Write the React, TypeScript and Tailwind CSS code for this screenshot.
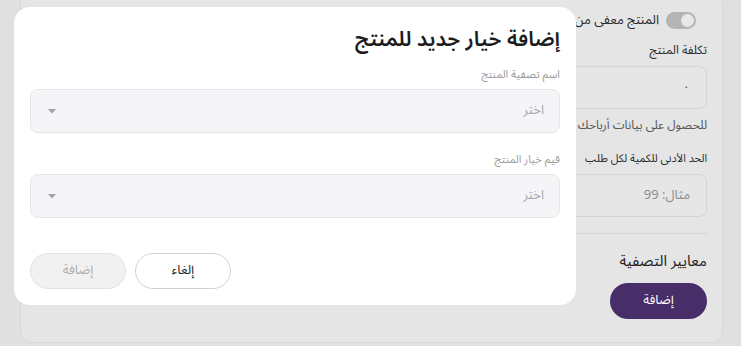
import React from "react";

function Caret() {
  return (
    <svg width="8" height="5" viewBox="0 0 8 5" className="block">
      <path d="M0 0 L8 0 L4 4.5 Z" fill="#a3a1aa" />
    </svg>
  );
}

function SelectBox() {
  return (
    <div className="h-[44px] w-full rounded-[8px] border border-[#e6e6ea] bg-[#f5f5f7] flex items-center justify-between pr-[15px] pl-[17px]">
      <span className="text-[13px] text-[#a8a8ad]">اختر</span>
      <Caret />
    </div>
  );
}

export default function App() {
  return (
    <div
      dir="rtl"
      className="relative w-[741px] h-[346px] overflow-hidden bg-[#e0e0e0]"
      style={{ fontFamily: "'Noto Sans Arabic', 'Noto Sans', sans-serif" }}
    >
      {/* background card */}
      <div className="mr-[18px] w-[703px] -mt-[10px] pt-[21px] pb-[23px] pr-[15px] pl-[15px] rounded-[12px] border border-[#d8d8d8] bg-[#e5e5e5]">
        <div className="flex items-center h-[17px] gap-[7px] mr-[11px]">
          <div className="relative shrink-0 w-[30px] h-[17px] rounded-full bg-[#b4b4b4]">
            <div className="absolute right-[2px] top-[2px] w-[13px] h-[13px] rounded-full bg-[#e8e8e8]" />
          </div>
          <div className="w-[85px] overflow-hidden whitespace-nowrap text-[13px] leading-[17px] text-[#2a2a2a]">
            المنتج معفى من <span className="text-[#3b6fd0]">الضريبة</span>
          </div>
        </div>
        <div className="mt-[14px] h-[16px] leading-[16px] text-[12px] text-[#2a2a2a]">تكلفة المنتج</div>
        <div className="mt-[7px] h-[43px] rounded-[8px] border border-[#d4d4d4] bg-[#e6e6e6] flex items-center pr-[16px]">
          <span className="text-[13px] text-[#555]">٠</span>
        </div>
        <div className="mt-[9px] w-[132px] overflow-hidden h-[16px] leading-[16px] text-[12px] text-[#555] whitespace-nowrap">
          للحصول على بيانات أرباحك بدقة، أدخل تكلفة المنتج
        </div>
        <div className="mt-[17px] h-[16px] leading-[16px] text-[11px] text-[#2a2a2a]">الحد الأدنى للكمية لكل طلب</div>
        <div className="mt-[7px] h-[43px] rounded-[8px] border border-[#d4d4d4] bg-[#e6e6e6] flex items-center pr-[16px]">
          <span className="text-[13px] text-[#8e8e8e]">مثال: 99</span>
        </div>
        <div className="mt-[16px] h-px bg-[#d4d4d4]" />
        <div className="mt-[15px] h-[24px] leading-[24px] text-[15px] text-[#222]">معايير التصفية</div>
        <div className="mt-[10px] flex">
          <div className="w-[97px] h-[36px] rounded-full bg-[#472e69] flex items-center justify-center text-[13px] text-white">
            إضافة
          </div>
        </div>
      </div>

      {/* modal */}
      <div className="absolute left-[14px] top-[7px] w-[562px] h-[298px] rounded-[16px] bg-white p-[16px] flex flex-col">
        <div className="h-[32px] leading-[32px] text-[21px] font-semibold text-[#1c1c1e]">إضافة خيار جديد للمنتج</div>
        <div className="mt-[12px] h-[16px] leading-[16px] text-[11px] text-[#9c9ca1]">اسم تصفية المنتج</div>
        <div className="mt-[6px]">
          <SelectBox />
        </div>
        <div className="mt-[19px] h-[16px] leading-[16px] text-[11px] text-[#9c9ca1]">قيم خيار المنتج</div>
        <div className="mt-[6px]">
          <SelectBox />
        </div>
        <div className="mt-[35px] flex justify-end gap-[9px]">
          <div className="w-[96px] h-[36px] rounded-full border border-[#d3d0da] bg-white flex items-center justify-center text-[13px] text-[#1e1e1e]">
            إلغاء
          </div>
          <div className="w-[96px] h-[36px] rounded-full border border-[#e2e2e2] bg-[#f1f1f1] flex items-center justify-center text-[13px] text-[#aeaeae]">
            إضافة
          </div>
        </div>
      </div>
    </div>
  );
}
